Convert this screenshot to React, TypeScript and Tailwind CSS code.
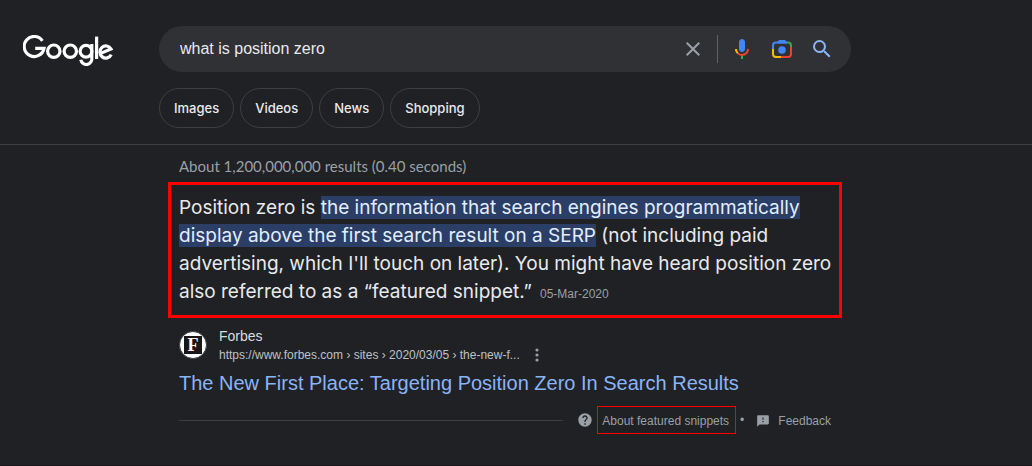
import { ReactNode } from "react";

const filters = ["Images", "Videos", "News", "Shopping"];

function GoogleLogo() {
  return (
    <svg
      width="91"
      height="32"
      viewBox="0 0 91 32"
      fill="none"
      stroke="#fff"
      strokeWidth="3.2"
      aria-hidden="true"
    >
      <path d="M19.4 5.8A10 10 0 1 0 21 13.4H12.2" />
      <circle cx="30.8" cy="16.2" r="6.2" />
      <circle cx="47.3" cy="16.2" r="6.2" />
      <circle cx="63" cy="16.2" r="5.9" />
      <path d="M68.8 9V22.6A5.6 5.8 0 0 1 57.8 24.8" />
      <path d="M73.6 1.6V24" />
      <path d="M77.6 18.4L88 14A5.9 6.1 0 1 0 88.2 19.6" />
    </svg>
  );
}

function ClearIcon() {
  return (
    <svg width="24" height="24" viewBox="0 0 24 24" fill="#9aa0a6">
      <path d="M19 6.41L17.59 5 12 10.59 6.41 5 5 6.41 10.59 12 5 17.59 6.41 19 12 13.41 17.59 19 19 17.59 13.41 12z" />
    </svg>
  );
}

function MicIcon() {
  return (
    <svg width="24" height="24" viewBox="0 0 24 24">
      <path
        fill="#4285f4"
        d="M12 15c1.66 0 3-1.31 3-2.97V5.01C15 3.35 13.66 2 12 2S9 3.34 9 5.01v7.02C9 13.69 10.34 15 12 15z"
      />
      <path fill="#34a853" d="M11 18.08h2V22h-2z" />
      <path
        fill="#fbbc05"
        d="M7.05 16.87C5.78 15.54 5 14.04 5 12h2c0 1.45.56 2.42 1.47 3.38v.32l-1.15 1.18z"
      />
      <path
        fill="#ea4335"
        d="M12 16.93a4.97 5.25 0 0 1-3.54-1.55l-1.41 1.49C8.31 18.21 10.07 19 12 19c3.87 0 6.99-2.92 6.99-7H17c0 2.92-2.24 4.93-5 4.93z"
      />
    </svg>
  );
}

function LensIcon() {
  return (
    <svg width="24" height="24" viewBox="0 0 24 24" fill="none" strokeWidth="2">
      <path stroke="#4285f4" d="M3 12V8.5A3 3 0 0 1 6 5.5H17" />
      <path fill="#4285f4" d="M7 5.5L9 3H15L17 5.5V6.5H7z" />
      <path stroke="#34a853" d="M17 5.5H18A3 3 0 0 1 21 8.5V10" />
      <path stroke="#fbbc05" d="M3 12V17A3 3 0 0 0 6 20H11" />
      <path stroke="#ea4335" d="M21 10V17A3 3 0 0 1 18 20H11" />
      <circle cx="12" cy="13" r="3.8" fill="#4285f4" />
    </svg>
  );
}

function SearchIcon() {
  return (
    <svg width="24" height="24" viewBox="0 0 24 24" fill="#8ab4f8">
      <path d="M15.5 14h-.79l-.28-.27A6.471 6.471 0 0 0 16 9.5 6.5 6.5 0 1 0 9.5 16c1.61 0 3.09-.59 4.23-1.57l.27.28v.79l5 4.99L20.49 19l-4.99-5zm-6 0C7.01 14 5 11.99 5 9.5S7.01 5 9.5 5 14 7.01 14 9.5 11.99 14 9.5 14z" />
    </svg>
  );
}

function HelpIcon() {
  return (
    <svg width="16" height="16" viewBox="0 0 24 24" fill="#9aa0a6">
      <path d="M12 2C6.48 2 2 6.48 2 12s4.48 10 10 10 10-4.48 10-10S17.52 2 12 2zm1 17h-2v-2h2v2zm2.07-7.75l-.9.92C13.45 12.9 13 13.5 13 15h-2v-.5c0-1.1.45-2.1 1.17-2.83l1.24-1.26c.37-.36.59-.86.59-1.41 0-1.1-.9-2-2-2s-2 .9-2 2H8c0-2.21 1.79-4 4-4s4 1.79 4 4c0 .88-.36 1.68-.93 2.25z" />
    </svg>
  );
}

function FeedbackIcon() {
  return (
    <svg width="14" height="14" viewBox="0 0 24 24" fill="#9aa0a6">
      <path d="M20 2H4c-1.1 0-2 .9-2 2v18l4-4h14c1.1 0 2-.9 2-2V4c0-1.1-.9-2-2-2zm-7 12h-2v-2h2v2zm0-4h-2V6h2v4z" />
    </svg>
  );
}

function IconButton({ label, children }: { label: string; children: ReactNode }) {
  return (
    <button
      type="button"
      aria-label={label}
      className="grid h-10 w-10 shrink-0 place-content-center"
    >
      {children}
    </button>
  );
}

function SearchBar() {
  return (
    <form
      role="search"
      onSubmit={(e) => e.preventDefault()}
      className="flex w-full max-w-[692px] items-center rounded-full bg-[#303134] py-[3px] pr-[9px] pl-5"
    >
      <input
        type="text"
        aria-label="Search"
        defaultValue="what is position zero"
        className="h-10 min-w-0 flex-1 bg-transparent pl-px text-base text-[#e8eaed] outline-none"
      />
      <button type="button" aria-label="Clear" className="mr-3 shrink-0">
        <ClearIcon />
      </button>
      <span className="mr-1 h-7 w-px bg-[#5f6368]" />
      <IconButton label="Search by voice">
        <MicIcon />
      </IconButton>
      <IconButton label="Search by image">
        <LensIcon />
      </IconButton>
      <IconButton label="Google Search">
        <SearchIcon />
      </IconButton>
    </form>
  );
}

function Header() {
  return (
    <header className="flex border-b border-[#3c4043] pt-[26px] pr-4 pb-4">
      <a href="#" aria-label="Google" className="w-[159px] shrink-0 pt-[9px] pl-[23px]">
        <GoogleLogo />
      </a>
      <div className="flex min-w-0 flex-1 flex-col gap-4">
        <SearchBar />
        <nav className="flex gap-1.5 font-[Inter,sans-serif] text-[13px] font-medium text-[#e8eaed]">
          {filters.map((filter) => (
            <a
              key={filter}
              href="#"
              className="flex h-10 items-center rounded-full border border-[#3c4043] px-3.5 pt-0.5"
            >
              {filter}
            </a>
          ))}
        </nav>
      </div>
    </header>
  );
}

function Snippet() {
  return (
    <p className="mt-1.5 border-3 border-[#ff0000] py-[9px] pl-2 font-[Inter,sans-serif] text-[19px] leading-7 text-[#e8eaed]">
      Position zero is{" "}
      <mark className="bg-[#2b3f66] text-[#e2eeff]">
        the information that search engines programmatically display above the
        first search result on a SERP
      </mark>{" "}
      (not including paid advertising, which I'll touch on later). You might
      have heard position zero also referred to as a “featured snippet.”
      <span className="ml-2 font-['Liberation_Sans',sans-serif] text-xs text-[#9aa0a6]">
        05-Mar-2020
      </span>
    </p>
  );
}

function Source() {
  return (
    <div className="mt-2 flex items-center gap-3">
      <span className="grid h-7 w-7 place-content-center rounded-full border border-[#3c4043] bg-white">
        <span className="grid h-[18px] w-[18px] place-content-center bg-[#171717] font-['Liberation_Serif',serif] text-lg leading-none font-bold text-white">
          F
        </span>
      </span>
      <div>
        <div className="text-sm leading-5 text-[#dadce0]">Forbes</div>
        <div className="flex items-center gap-3.5 text-xs leading-[18px] text-[#bdc1c6]">
          <cite className="not-italic">
            https://www.forbes.com › sites › 2020/03/05 › the-new-f...
          </cite>
          <button type="button" aria-label="About this result">
            <svg width="6" height="14" viewBox="0 0 6 14" fill="#9aa0a6">
              <circle cx="3" cy="2" r="1.6" />
              <circle cx="3" cy="7" r="1.6" />
              <circle cx="3" cy="12" r="1.6" />
            </svg>
          </button>
        </div>
      </div>
    </div>
  );
}

export default function App() {
  return (
    <div className="min-h-screen border-b border-[#17171b] bg-[#202124] font-['Liberation_Sans',Arial,sans-serif]">
      <Header />
      <main className="max-w-[842px] pt-[11px] pl-[168px]">
        <p className="pl-[11px] font-[Lato,sans-serif] text-[15px] leading-5 text-[#9aa0a6]">
          About 1,200,000,000 results (0.40 seconds)
        </p>
        <Snippet />
        <article className="px-[11px]">
          <Source />
          <h3 className="mt-1.5 text-xl leading-[26px] text-[#8ab4f8]">
            <a href="#">
              The New First Place: Targeting Position Zero In Search Results
            </a>
          </h3>
          <div className="mt-2.5 flex items-center text-xs text-[#9aa0a6]">
            <span className="mr-3.5 h-px flex-1 bg-[#3c4043]" />
            <HelpIcon />
            <a href="#" className="ml-1 border border-[#ff0000] px-1 pt-1.5 pr-1.5 pb-1">
              About featured snippets
            </a>
            <span className="mx-1">•</span>
            <a href="#" className="ml-2 flex items-center gap-2 pt-0.5">
              <FeedbackIcon />
              Feedback
            </a>
          </div>
        </article>
      </main>
    </div>
  );
}
